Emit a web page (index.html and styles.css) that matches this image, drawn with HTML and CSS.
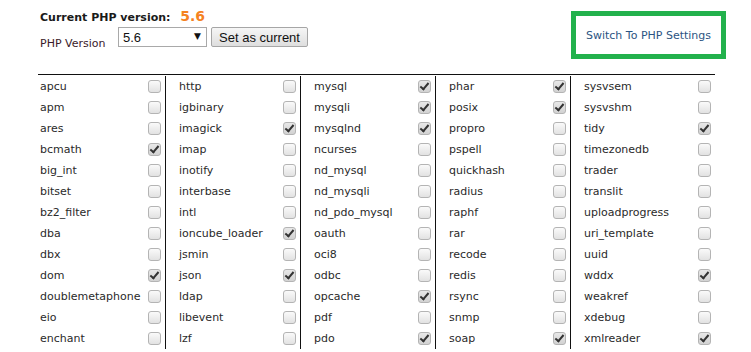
FILE: index.html
```html
<!DOCTYPE html>
<html lang="en">
<head>
    <meta charset="UTF-8">
    <meta name="viewport" content="width=device-width, initial-scale=1.0">
    <title>PHP Selector</title>
    <link rel="stylesheet" href="styles.css">
</head>
<body>
    <div class="top">
        <div class="version-box">
            <div class="current">Current PHP version: <span class="current-num">5.6</span></div>
            <div class="version-row">
                <span class="version-label">PHP Version</span>
                <span class="select-wrap">
                    <select class="version-select">
                        <option>5.6</option>
                    </select>
                </span>
                <button class="set-btn">Set as current</button>
            </div>
        </div>
        <a class="switch-link" href="#">Switch To PHP Settings</a>
    </div>

    <div class="ext-table" id="extTable"></div>

    <script>
        const extensions = [
            ['apcu', 'apm', 'ares', '*bcmath', 'big_int', 'bitset', 'bz2_filter', 'dba', 'dbx', '*dom', 'doublemetaphone', 'eio', 'enchant'],
            ['http', 'igbinary', '*imagick', 'imap', 'inotify', 'interbase', 'intl', '*ioncube_loader', 'jsmin', '*json', 'ldap', 'libevent', 'lzf'],
            ['*mysql', '*mysqli', '*mysqlnd', 'ncurses', 'nd_mysql', 'nd_mysqli', 'nd_pdo_mysql', 'oauth', 'oci8', 'odbc', '*opcache', 'pdf', '*pdo'],
            ['*phar', '*posix', 'propro', 'pspell', 'quickhash', 'radius', 'raphf', 'rar', 'recode', 'redis', 'rsync', 'snmp', '*soap'],
            ['sysvsem', 'sysvshm', '*tidy', 'timezonedb', 'trader', 'translit', 'uploadprogress', 'uri_template', 'uuid', '*wddx', 'weakref', 'xdebug', '*xmlreader']
        ];

        const table = document.getElementById('extTable');
        for (const list of extensions) {
            const col = document.createElement('div');
            col.className = 'ext-col';
            for (const item of list) {
                const on = item.startsWith('*');
                const name = on ? item.slice(1) : item;
                const row = document.createElement('label');
                row.className = 'ext-row';
                row.innerHTML = `
                    <span class="ext-name">${name}</span>
                    <input type="checkbox" class="ext-check" ${on ? 'checked' : ''}>
                `;
                col.appendChild(row);
            }
            table.appendChild(col);
        }
    </script>
</body>
</html>
```

FILE: styles.css
```css
body {
    margin: 0;
    font-family: "DejaVu Sans", Verdana, sans-serif;
    font-size: 11px;
    color: #2a2a2a;
}
.top {
    display: flex;
    justify-content: space-between;
    align-items: flex-start;
    padding: 8px 25px 0 40px;
    height: 66px;
}
.current {
    font-weight: bold;
    font-size: 11px;
    color: #1a1a1a;
}
.current-num {
    color: #f5821f;
    font-size: 14px;
    margin-left: 6px;
}
.version-row {
    display: flex;
    align-items: flex-start;
    margin-top: 3px;
}
.version-label {
    margin-top: 10px;
    width: 78px;
    color: #3a1a2a;
}
.select-wrap {
    position: relative;
}
.select-wrap::after {
    content: "▼";
    position: absolute;
    right: 6px;
    top: 4px;
    font-size: 9px;
    color: #111;
    pointer-events: none;
}
.version-select {
    appearance: none;
    width: 89px;
    height: 20px;
    font-family: "Liberation Sans", Arial, sans-serif;
    font-size: 13px;
    color: #111;
    border: 1px solid #a9a9a9;
    border-radius: 0;
    background: #fff;
    padding: 0 4px;
}
.set-btn {
    margin-left: 4px;
    height: 20px;
    width: 97px;
    padding: 0;
    font-family: "Liberation Sans", Arial, sans-serif;
    font-size: 13px;
    color: #111;
    background: linear-gradient(#f6f6f6, #dedede);
    border: 1px solid #a6a6a6;
    border-radius: 2px;
}
.switch-link {
    margin-top: 3px;
    width: 145px;
    height: 38px;
    display: flex;
    align-items: center;
    justify-content: center;
    border: 5px solid #22b14c;
    color: #2c5482;
    text-decoration: none;
    font-size: 11px;
}
.ext-table {
    display: flex;
    margin-left: 38px;
    width: 677px;
    border-top: 1px solid #111;
    padding-top: 1px;
    padding-bottom: 10px;
}
.ext-col {
    width: 135px;
    border-left: 1px solid #111;
    padding: 0 4px 0 13px;
    box-sizing: border-box;
}
.ext-col:first-child {
    width: 127px;
    border-left: none;
    padding-left: 2px;
}
.ext-col:last-child {
    width: 145px;
}
.ext-row {
    display: flex;
    justify-content: space-between;
    align-items: center;
    height: 21px;
}
.ext-check {
    appearance: none;
    margin: 0;
    width: 13px;
    height: 13px;
    border: 1px solid #b4b4b4;
    border-radius: 3px;
    background: linear-gradient(#fafafa, #e2e2e2);
    position: relative;
}
.ext-check:checked {
    background: linear-gradient(#e8e8e8, #d2d2d2);
}
.ext-check:checked::after {
    content: "";
    position: absolute;
    left: 3px;
    top: 0;
    width: 3px;
    height: 7px;
    border-right: 2px solid #333;
    border-bottom: 2px solid #333;
    transform: rotate(40deg);
}
```
